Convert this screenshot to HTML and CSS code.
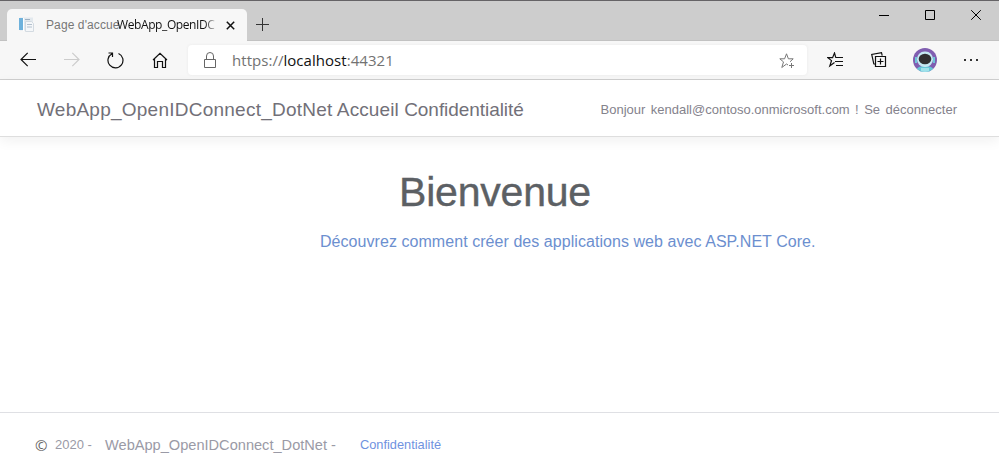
FILE: index.html
```html
<!DOCTYPE html>
<html lang="fr">
<head>
<meta charset="utf-8">
<title>WebApp_OpenIDConnect_DotNet</title>
<link rel="stylesheet" href="styles.css">
</head>
<body>
<div class="titlebar">
  <div class="tab">
    <svg class="favicon" width="16" height="16" viewBox="0 0 16 16"><path d="M1 .5h13v13H1z" fill="#e3e9ee"/><path d="M0 1h4v12H0z" fill="#6fb2dc"/><path d="M4 1h1v13H4z" fill="#fff"/><path d="M6 2.500h5" stroke="#9fb2c4"/><path d="M6.500 4.500h6l2 2v8h-8z" fill="#f5f7f9" stroke="#d3dae1"/><path d="M8 7.500h5M8 10h5" stroke="#b4c1ce"/></svg>
    <span class="tab-page">Page d'accue</span><span class="tab-app">WebApp_OpenIDC</span>
    <svg class="tab-close" width="9" height="9" viewBox="0 0 9 9"><path d="M.8.8l7.400 7.400M8.200.8L.8 8.200" stroke="#111" stroke-width="1.500"/></svg>
  </div>
  <svg class="new-tab" width="13" height="13" viewBox="0 0 13 13"><path d="M6.500 0v13M0 6.500h13" stroke="#333"/></svg>
  <div class="window-controls">
    <svg width="10" height="11" viewBox="0 0 10 11"><path d="M0 5.500h10" stroke="#000"/></svg>
    <svg width="10" height="10" viewBox="0 0 10 10"><path d="M.5.5h9v9h-9z" fill="none" stroke="#000"/></svg>
    <svg width="10" height="10" viewBox="0 0 10 10"><path d="M.2.2l9.600 9.600M9.800.2L.2 9.800" stroke="#000"/></svg>
  </div>
</div>
<div class="toolbar">
  <svg class="back" width="16" height="16" viewBox="0 0 16 16"><path d="M16 7.500H1M7.700.8L1 7.500l6.700 6.700" fill="none" stroke="#111" stroke-width="1.200"/></svg>
  <svg class="forward" width="16" height="16" viewBox="0 0 16 16"><path d="M0 7.500h15M8.300.8L15 7.500l-6.700 6.700" fill="none" stroke="#ccc" stroke-width="1.200"/></svg>
  <svg class="reload" width="17" height="17" viewBox="0 0 17 17"><path d="M11.500 1.500A7.500 7.500 0 1 1 5 1.700M1.500 1h4v4" fill="none" stroke="#111" stroke-width="1.200"/></svg>
  <svg class="home" width="16" height="17" viewBox="0 0 16 17"><path d="M1 8l7-6.700L15 8M2.500 7v8.500h3v-6h5v6h3V7" fill="none" stroke="#111" stroke-width="1.200"/></svg>
  <div class="address">
    <svg class="lock" width="12" height="16" viewBox="0 0 12 16"><path d="M.5 7.500h11v8H.5zM2.500 7.500V4a3.500 3.500 0 0 1 7 0v3.500" fill="none" stroke="#666"/></svg>
    <span class="url">https://<b>localhost</b>:44321</span>
    <svg class="star" width="17" height="17" viewBox="0 0 17 17"><path d="M9 12L7.500 11l-4.700 3.500 1.700-5.600L.8 5.800h4.800l1.900-5 1.900 5h4.800l-3.200 3M12.500 10v5M10 12.500h5" fill="none" stroke="#777"/></svg>
  </div>
  <svg class="favorites" width="16" height="16" viewBox="0 0 16 16"><path d="M7.500 10.500L2.800 14l1.700-5.400L.8 5.700h4.800L7.500 1l1.300 4.700M8.500 5.500H16M8 9.500h8M9 13.500h7" fill="none" stroke="#111" stroke-width="1.200"/></svg>
  <svg class="collections" width="16" height="16" viewBox="0 0 16 16"><path d="M4.500 4.500h10v10h-10zM9.500 6.500v6M6.500 9.500h6M3.800 12.200l-1-.4L.7 2.500 10.500.7l.7 3" fill="none" stroke="#111" stroke-width="1.200"/></svg>
  <svg class="avatar" width="24" height="24" viewBox="0 0 24 24"><defs><clipPath id="disc"><circle cx="12" cy="12" r="12"/></clipPath></defs><g clip-path="url(#disc)"><path d="M0 0h24v24H0z" fill="#805eb0"/><path d="M3 24c0-4 3-6 9-6s9 2 9 6z" fill="#67c7d8"/><rect x="4" y="3.500" width="16" height="15.500" rx="7.500" fill="#c4e8f2"/><path d="M8 20h8v4H8z" fill="#a0e1ea"/><ellipse cx="12" cy="11" rx="6.300" ry="5.300" fill="#302f31"/><path d="M2 9h2v6H2zM20 9h2v6h-2z" fill="#70c5d9"/></g></svg>
  <svg class="more" width="15" height="2" viewBox="0 0 15 2"><path d="M0 0h2v2H0zM6 0h2v2H6zM12 0h2v2h-2z" fill="#333"/></svg>
</div>
<header class="navbar">
  <span class="brand"><span class="brand-name">WebApp_OpenIDConnect_DotNet</span> Accueil <span class="brand-privacy">Confidentialité</span></span>
  <span class="account">Bonjour kendall@contoso.onmicrosoft.com ! Se déconnecter</span>
</header>
<main>
  <h1>Bienvenue</h1>
  <a class="learn">Découvrez comment créer des applications web avec ASP.NET Core.</a>
</main>
<footer>
  <span class="copy">©</span><span class="year">2020 -</span><span class="app">WebApp_OpenIDConnect_DotNet -</span><a class="privacy">Confidentialité</a>
</footer>
</body>
</html>
```
FILE: styles.css
```css
* { box-sizing: border-box; }
body { margin: 0; height: 473px; display: flex; flex-direction: column; overflow: hidden; background: #fff; font-family: "Liberation Sans", Arial, sans-serif; white-space: nowrap; }
svg { display: block; flex: none; }
.titlebar { height: 41px; flex: none; display: flex; background: #cdcdcd; border-top: 1px solid #656366; box-shadow: inset 0 -1px #c2c2c2; }
.tab { width: 240px; height: 32px; margin: 8px 0 0 7px; display: flex; align-items: center; background: #f7f7f7; border-radius: 5px 5px 0 0; }
.favicon { margin-left: 12px; }
.tab-page { width: 71px; margin-left: 11px; font-size: 12px; letter-spacing: .1px; color: #777; line-height: 18px; }
.tab-app { width: 101px; font: 12px/18px "Open Sans", sans-serif; letter-spacing: -.4px; color: #111; -webkit-mask-image: linear-gradient(90deg, #000 86%, transparent 100%); mask-image: linear-gradient(90deg, #000 86%, transparent 100%); }
.tab-close { margin-left: 8px; }
.new-tab { margin: 17px 0 0 9px; }
.window-controls { display: flex; gap: 36px; margin: 9px 18px 0 auto; }
.toolbar { height: 39px; flex: none; display: flex; align-items: center; background: #f7f7f7; border-bottom: 1px solid #cfcfcf; }
.back { margin-left: 20px; }
.forward { margin-left: 28px; }
.reload { margin-left: 27px; }
.home { margin-left: 28px; }
.address { width: 619px; height: 30px; margin-left: 20px; display: flex; align-items: center; background: #fff; border-radius: 4px; box-shadow: 0 0 3px #e9e9e9; }
.lock { margin-left: 16px; }
.url { margin-left: 16px; font: 15px/20px "Open Sans", sans-serif; letter-spacing: .04px; color: #727272; }
.url b { font-weight: 400; color: #111; }
.star { margin: 2px 11px 0 auto; }
.favorites { margin-left: 20px; }
.collections { margin-left: 28px; }
.avatar { margin-left: 26px; }
.more { margin-left: 27px; }
.navbar { height: 57px; flex: none; display: flex; align-items: center; padding: 3px 0 0 37px; border-bottom: 1px solid #dedede; box-shadow: 0 4px 12px rgba(0, 0, 0, .06); }
.brand { font-size: 19px; letter-spacing: .1px; color: #727078; }
.brand-name { letter-spacing: .24px; }
.brand-privacy { letter-spacing: -.06px; }
.account { margin: 0 42px 0 auto; font-size: 13px; word-spacing: 1.8px; color: #84828c; }
main { flex: 1; display: flex; flex-direction: column; align-items: flex-start; }
h1 { margin: 31px 0 0 399px; font-size: 41px; line-height: 48px; font-weight: 400; letter-spacing: -.2px; color: #5c6064; -webkit-text-stroke: .4px #5c6064; }
.learn { margin: 16px 0 0 320px; font-size: 16px; line-height: 20px; letter-spacing: .055px; color: #6c8fcf; }
footer { height: 61px; flex: none; display: flex; align-items: center; padding: 3px 0 0 35px; border-top: 1px solid #dfe0e4; color: #9a9aa6; }
.copy { width: 20px; font: 15px/20px "Open Sans", sans-serif; color: #666; }
.year { width: 50px; font-size: 13px; }
.app { width: 255px; font-size: 14.600px; padding-top: 1px; }
.privacy { font-size: 12.800px; color: #6f92df; }
```
